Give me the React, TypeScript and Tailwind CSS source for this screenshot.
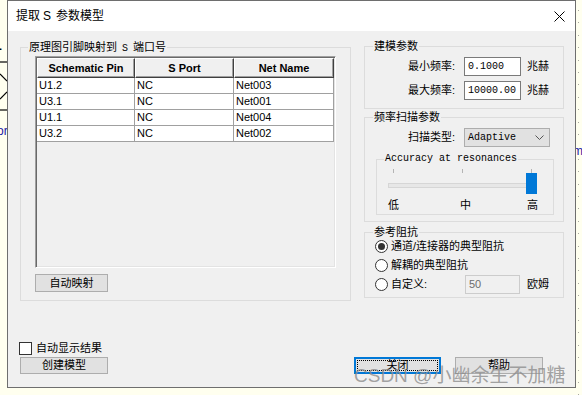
import React from "react";

function GroupBox({
  label,
  className = "",
  labelClass = "",
  labelLeft = "left-[7px]",
  children,
}: {
  label: React.ReactNode;
  className?: string;
  labelClass?: string;
  labelLeft?: string;
  children?: React.ReactNode;
}) {
  return (
    <div className={`relative border border-[#dcdcdc] ${className}`}>
      <span
        className={`absolute -top-[8px] ${labelLeft} bg-[#f0f0f0] px-[1px] leading-[14px] whitespace-nowrap ${labelClass}`}
      >
        {label}
      </span>
      {children}
    </div>
  );
}

const rows = [
  ["U1.2", "NC", "Net003"],
  ["U3.1", "NC", "Net001"],
  ["U1.1", "NC", "Net004"],
  ["U3.2", "NC", "Net002"],
];

function PinTable() {
  return (
    <div className="w-[301px] h-[212px] border border-t-[#a0a0a0] border-l-[#a0a0a0] border-r-white border-b-white shadow-[inset_1px_1px_0_#696969,inset_-1px_-1px_0_#e3e3e3] p-[1px] bg-[#f0f0f0]">
      <div className="flex h-[20px] text-[11px] font-bold">
        {["Schematic Pin", "S Port", "Net Name"].map((h, i) => (
          <div
            key={h}
            className={`${i === 2 ? "flex-1" : i === 0 ? "w-[98px]" : "w-[99px]"} flex items-center justify-center bg-[#f0f0f0] border-t border-l border-t-white border-l-white border-r border-b border-r-[#404040] border-b-[#404040] shadow-[inset_-1px_-1px_0_#a0a0a0]`}
          >
            {h}
          </div>
        ))}
      </div>
      {rows.map((r) => (
        <div key={r[0]} className="flex h-[16px] text-[11px]">
          {r.map((c, i) => (
            <div
              key={i}
              className={`${i === 2 ? "flex-1" : i === 0 ? "w-[98px]" : "w-[99px]"} bg-white border-b border-r border-[#a0a0a0] pl-[2px] leading-[15px]`}
            >
              {c}
            </div>
          ))}
        </div>
      ))}
    </div>
  );
}

function Btn({ label, className = "" }: { label: string; className?: string }) {
  return (
    <div
      className={`flex items-center justify-center bg-[#e1e1e1] border border-[#adadad] text-[11px] ${className}`}
    >
      {label}
    </div>
  );
}

function Radio({ checked }: { checked?: boolean }) {
  return (
    <div className="w-[13px] h-[13px] rounded-full border border-[#333] bg-white flex items-center justify-center shrink-0">
      {checked && <div className="w-[7px] h-[7px] rounded-full bg-[#333]" />}
    </div>
  );
}

function FreqRow({ label, value }: { label: string; value: string }) {
  return (
    <div className="flex items-center h-[19px] pl-[43px] text-[11px]">
      <span className="w-[56px]">{label}</span>
      <div className="w-[57px] h-[19px] border border-[#7a7a7a] bg-white pl-[3px] font-['Liberation_Mono',monospace] text-[10px] leading-[17px]">
        {value}
      </div>
      <span className="ml-[6px]">兆赫</span>
    </div>
  );
}

function Slider() {
  return (
    <div className="relative h-full">
      <div className="absolute left-[16px] top-[9px] w-[1px] h-[4px] bg-[#b4b4b4]" />
      <div className="absolute left-[85px] top-[9px] w-[1px] h-[4px] bg-[#b4b4b4]" />
      <div className="absolute left-[154px] top-[9px] w-[1px] h-[4px] bg-[#b4b4b4]" />
      <div className="absolute left-[11px] top-[23px] w-[148px] h-[5px] bg-[#e7e7e7] border border-[#d6d6d6]" />
      <div className="absolute left-[149px] top-[13px] w-[11px] h-[21px] bg-[#0078d7]" />
      <div className="absolute left-0 right-0 top-[38px] flex text-[11px] leading-[14px]">
        <span className="ml-[11px]">低</span>
        <span className="ml-[61px]">中</span>
        <span className="ml-[56px]">高</span>
      </div>
    </div>
  );
}

function LeftStrip() {
  return (
    <div className="relative w-[7px] h-full shrink-0 overflow-hidden">
      <span className="absolute left-[-6px] top-[37px] text-[14px] font-bold leading-[16px]">1</span>
      <svg width="7" height="120" className="absolute left-0 top-0">
        <line x1="0" y1="62" x2="7" y2="62" stroke="#000" strokeWidth="1.2" />
        <line x1="0" y1="74" x2="7" y2="81" stroke="#000" strokeWidth="1.2" />
        <line x1="7" y1="92" x2="0" y2="99" stroke="#000" strokeWidth="1.2" />
        <line x1="0" y1="110" x2="7" y2="110" stroke="#000" strokeWidth="1.2" />
      </svg>
      <span className="absolute left-[-3px] top-[124px] text-[12px] leading-[14px] text-[#1a1aa8]">or</span>
    </div>
  );
}

function RightStrip() {
  const dots = Array.from({ length: 32 }, (_, i) => 10 + i * 12.4);
  return (
    <div className="relative w-[6px] h-full shrink-0 overflow-hidden">
      <svg width="6" height="395" className="absolute left-0 top-0">
        {dots.map((y) => (
          <rect key={y} x="2" y={Math.round(y)} width="1" height="1" fill="#a8a8a0" />
        ))}
      </svg>
      <span className="absolute left-[-3px] top-[144px] text-[12px] leading-[14px] text-[#1a1aa8] bg-[#ffffef]">m</span>
    </div>
  );
}

export default function App() {
  return (
    <div className="relative flex w-[582px] h-[395px] overflow-hidden bg-[#ffffef] font-['Liberation_Sans','Noto_Sans_CJK_SC',sans-serif] text-black">
      <LeftStrip />
      <div className="flex flex-col w-[569px] h-[388px] shrink-0 border border-[#6e6e6e] bg-[#f0f0f0]">
        {/* title bar */}
        <div className="flex items-center justify-between h-[30px] shrink-0 bg-white pl-[8px] pr-[10px]">
          <span className="text-[12px] leading-[16px]">
            提取<span className="ml-[3px] mr-[5px]">S</span>参数模型
          </span>
          <svg width="11" height="11" viewBox="0 0 11 11">
            <path d="M0.5 0.5 L10.5 10.5 M10.5 0.5 L0.5 10.5" stroke="#000" strokeWidth="1" fill="none" />
          </svg>
        </div>

        <div className="flex flex-col pl-[12px]">
          <div className="flex items-start">
            <GroupBox
              className="mt-[16px] w-[331px] h-[254px] pt-[8px] pl-[14px]"
              labelClass="text-[11px]"
              label={
                <>
                  原理图引脚映射到<span className="mx-[5px] font-['Liberation_Mono',monospace] text-[10px]">S</span>端口号
                </>
              }
            >
              <PinTable />
              <Btn label="自动映射" className="mt-[6px] w-[73px] h-[18px]" />
            </GroupBox>

            <div className="ml-[13px] mt-[15px] w-[200px] flex flex-col">
              <GroupBox className="h-[63px] pt-[10px] flex flex-col gap-[5px]" labelLeft="left-[8px]" labelClass="text-[11px]" label="建模参数">
                <FreqRow label="最小频率:" value="0.1000" />
                <FreqRow label="最大频率:" value="10000.00" />
              </GroupBox>

              <GroupBox className="mt-[8px] h-[105px] pt-[10px]" labelLeft="left-[8px]" labelClass="text-[11px]" label="频率扫描参数">
                <div className="flex items-center h-[19px] pl-[43px] text-[11px]">
                  <span className="w-[56px]">扫描类型:</span>
                  <div className="flex items-center justify-between w-[86px] h-[19px] bg-[#e1e1e1] border border-[#adadad] pl-[3px] pr-[5px]">
                    <span className="font-['Liberation_Mono',monospace] text-[10px] leading-[17px]">Adaptive</span>
                    <svg width="9" height="5" viewBox="0 0 9 5">
                      <path d="M0.5 0.5 L4.5 4.5 L8.5 0.5" stroke="#555" strokeWidth="1" fill="none" />
                    </svg>
                  </div>
                </div>
                <GroupBox
                  className="mt-[12px] ml-[11px] w-[178px] h-[56px]"
                  labelClass="font-['Liberation_Mono',monospace] text-[10px]"
                  label="Accuracy at resonances"
                >
                  <Slider />
                </GroupBox>
              </GroupBox>

              <GroupBox className="mt-[10px] h-[66px] pt-[4px] flex flex-col gap-[1px] text-[11px]" labelLeft="left-[8px]" labelClass="text-[11px]" label="参考阻抗">
                <div className="flex items-center h-[18px] pl-[10px]">
                  <Radio checked />
                  <span className="ml-[3px]">通道/连接器的典型阻抗</span>
                </div>
                <div className="flex items-center h-[18px] pl-[10px]">
                  <Radio />
                  <span className="ml-[3px]">解耦的典型阻抗</span>
                </div>
                <div className="flex items-center h-[19px] pl-[10px]">
                  <Radio />
                  <span className="ml-[3px] w-[74px]">自定义:</span>
                  <div className="w-[55px] h-[19px] border border-[#cccccc] bg-[#f0f0f0] pl-[3px] leading-[17px] text-[#6d6d6d]">
                    50
                  </div>
                  <span className="ml-[7px]">欧姆</span>
                </div>
              </GroupBox>
            </div>
          </div>

          {/* bottom */}
          <div className="flex items-end mt-[41px]">
            <div className="flex flex-col w-[88px]">
              <div className="flex items-center h-[13px] -ml-[1px] text-[11px]">
                <div className="w-[13px] h-[13px] border border-[#333] bg-white shrink-0" />
                <span className="ml-[4px] whitespace-nowrap">自动显示结果</span>
              </div>
              <Btn label="创建模型" className="mt-[2px] w-[88px] h-[17px]" />
            </div>
            <div className="ml-[246px] w-[87px] h-[17px] bg-[#e1e1e1] border border-[#0078d7] shadow-[inset_0_0_0_1px_#0078d7] p-[2px]">
              <div className="h-full flex items-center justify-center border border-dotted border-black text-[11px]">
                关闭
              </div>
            </div>
            <Btn label="帮助" className="ml-[14px] w-[88px] h-[17px]" />
          </div>
        </div>
      </div>
      <RightStrip />

      {/* watermark */}
      <div className="absolute left-[354px] top-[366px] whitespace-nowrap text-[19px] text-[#8c8c8c]/80 leading-none pointer-events-none">
        CSDN @小幽余生不加糖
      </div>
    </div>
  );
}
